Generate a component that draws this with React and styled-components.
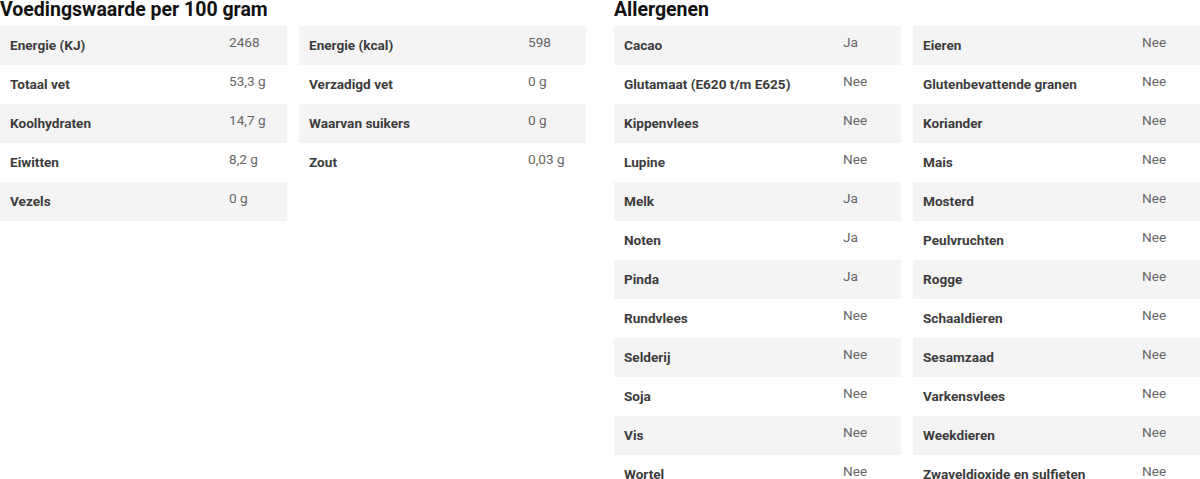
import React from "react";
import styled, { createGlobalStyle } from "styled-components";

const GlobalStyle = createGlobalStyle`
  body {
    margin: 0;
    background: #fff;
    font-family: Roboto, "Liberation Sans", Arial, sans-serif;
  }
`;

let Pagina = styled.div`
  display: grid;
  grid-template-columns: 1fr 1fr;
  column-gap: 28px;
  width: 1200px;
  height: 479px;
  overflow: hidden;
`;

let Sectie = styled.section`
  display: flex;
  flex-direction: column;
  gap: 7px;
`;

let Titel = styled.h2`
  margin: 0;
  font-size: 19.5px;
  line-height: 19px;
  font-weight: 700;
  color: #111;
`;

let Kolommen = styled.div`
  display: grid;
  grid-template-columns: 1fr 1fr;
  column-gap: 12px;
  align-items: start;
`;

let Lijst = styled.div`
  display: flex;
  flex-direction: column;
`;

let Regel = styled.div`
  display: grid;
  grid-template-columns: 1fr 58px;
  height: 39px;
  padding-left: 10px;
  background: ${(props) => (props.grijs ? "#f4f4f5" : "transparent")};
`;

let Naam = styled.span`
  padding-top: 11px;
  font-size: 13.6px;
  line-height: 16px;
  font-weight: 700;
  color: #3c3c3c;
`;

let Waarde = styled.span`
  padding-top: 8px;
  font-size: 13.6px;
  line-height: 16px;
  color: #666;
`;

const voeding = [
  [
    ["Energie (KJ)", "2468"],
    ["Totaal vet", "53,3 g"],
    ["Koolhydraten", "14,7 g"],
    ["Eiwitten", "8,2 g"],
    ["Vezels", "0 g"],
  ],
  [
    ["Energie (kcal)", "598"],
    ["Verzadigd vet", "0 g"],
    ["Waarvan suikers", "0 g"],
    ["Zout", "0,03 g"],
  ],
];

const allergenen = [
  [
    ["Cacao", "Ja"],
    ["Glutamaat (E620 t/m E625)", "Nee"],
    ["Kippenvlees", "Nee"],
    ["Lupine", "Nee"],
    ["Melk", "Ja"],
    ["Noten", "Ja"],
    ["Pinda", "Ja"],
    ["Rundvlees", "Nee"],
    ["Selderij", "Nee"],
    ["Soja", "Nee"],
    ["Vis", "Nee"],
    ["Wortel", "Nee"],
  ],
  [
    ["Eieren", "Nee"],
    ["Glutenbevattende granen", "Nee"],
    ["Koriander", "Nee"],
    ["Mais", "Nee"],
    ["Mosterd", "Nee"],
    ["Peulvruchten", "Nee"],
    ["Rogge", "Nee"],
    ["Schaaldieren", "Nee"],
    ["Sesamzaad", "Nee"],
    ["Varkensvlees", "Nee"],
    ["Weekdieren", "Nee"],
    ["Zwaveldioxide en sulfieten", "Nee"],
  ],
];

function Tabel(props) {
  return (
    <Kolommen>
      {props.kolommen.map((kolom, k) => (
        <Lijst key={k}>
          {kolom.map(([naam, waarde], i) => (
            <Regel key={naam} grijs={i % 2 === 0}>
              <Naam>{naam}</Naam>
              <Waarde>{waarde}</Waarde>
            </Regel>
          ))}
        </Lijst>
      ))}
    </Kolommen>
  );
}

function App() {
  return (
    <>
      <GlobalStyle />
      <Pagina>
        <Sectie>
          <Titel>Voedingswaarde per 100 gram</Titel>
          <Tabel kolommen={voeding} />
        </Sectie>
        <Sectie>
          <Titel>Allergenen</Titel>
          <Tabel kolommen={allergenen} />
        </Sectie>
      </Pagina>
    </>
  );
}

export default App;
